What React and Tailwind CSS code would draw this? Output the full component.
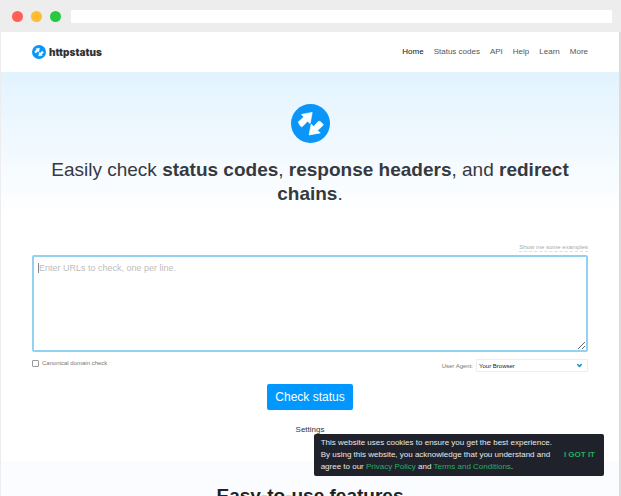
import { ChevronDown } from 'lucide-react'

const NAV = [
  ['Home', '#home'],
  ['Status codes', '#codes'],
  ['API', '#api'],
  ['Help', '#help'],
  ['Learn', '#learn'],
  ['More', '#more'],
]

function ArrowsLogo({ className }) {
  return (
    <svg viewBox="0 0 116 116" className={className} aria-hidden="true">
      <circle cx="58" cy="58" r="58" fill="#0a96f8" />
      <g fill="#fff" stroke="#fff" strokeWidth="2" strokeLinejoin="round">
        <path d="M63 25 31 31 38 39 21 54 25 59 25 62 31 68 36 65 49 51 57 58Z" />
        <path d="M54 92 60 60 68 67 80 53 86 51 96 61 94 65 79 79 87 86Z" />
      </g>
    </svg>
  )
}

function BrowserBar() {
  return (
    <div className="flex h-8 shrink-0 items-center bg-[#ededed] pl-3 pr-[9px]">
      <div className="flex gap-2">
        <span className="h-[11px] w-[11px] rounded-full bg-[#ff5f57]" />
        <span className="h-[11px] w-[11px] rounded-full bg-[#febc2e]" />
        <span className="h-[11px] w-[11px] rounded-full bg-[#28c840]" />
      </div>
      <div className="ml-[10px] h-[13px] flex-1 bg-white" />
    </div>
  )
}

function Header() {
  return (
    <header className="flex h-10 shrink-0 items-center justify-between px-[31px]">
      <a href="#home" className="flex items-center gap-[3px] text-[#333]">
        <ArrowsLogo className="h-[14px] w-[14px]" />
        <span className="font-['Inter',sans-serif] text-[10px] font-black">httpstatus</span>
      </a>
      <nav className="flex gap-[10px] text-[8px] text-[#555]">
        {NAV.map(([label, href], i) => (
          <a key={label} href={href} className={i === 0 ? 'text-[#111]' : ''}>
            {label}
          </a>
        ))}
      </nav>
    </header>
  )
}

function Hero() {
  return (
    <section className="flex h-[144px] shrink-0 flex-col items-center bg-linear-to-b from-[#e2f3fe] to-white px-[31px] pt-8">
      <ArrowsLogo className="h-[39px] w-[39px]" />
      <h1 className="mt-[15px] text-center text-[19px] leading-6 text-[#363a3e]">
        Easily check <b>status codes</b>, <b>response headers</b>, and <b>redirect chains</b>.
      </h1>
    </section>
  )
}

function CheckForm() {
  return (
    <form className="flex shrink-0 flex-col px-[31px] pt-[27px] pb-[25px]">
      <a
        href="#examples"
        className="self-end border-b border-dashed border-[#ddd] text-[6px] leading-[8px] text-[#aaa]"
      >
        Show me some examples
      </a>
      <div className="relative mt-[3px] flex">
        <textarea
          aria-label="URLs to check"
          placeholder="Enter URLs to check, one per line."
          className="h-[97px] w-full rounded-[2px] border-2 border-[#94d1f0] bg-white px-[5px] py-[5px] text-[9px] leading-3 outline-none placeholder:text-[#bdbdbd]"
        />
        <span className="absolute top-2 left-[6px] h-[10px] w-px bg-[#888]" />
      </div>
      <div className="mt-[7px] flex items-start justify-between text-[6px] leading-[8px] text-[#777]">
        <label className="flex items-center gap-[3px]">
          <input
            type="checkbox"
            className="h-[7px] w-[7px] appearance-none rounded-[1px] border border-[#999] bg-white"
          />
          Canonical domain check
        </label>
        <div className="flex items-center gap-[3px]">
          <label htmlFor="agent">User Agent:</label>
          <div className="relative flex">
            <select
              id="agent"
              className="h-[13px] w-[112px] appearance-none rounded-[1px] border border-[#eee] bg-white pl-[2px] text-[6px] text-[#222]"
            >
              <option>Your Browser</option>
            </select>
            <ChevronDown
              className="pointer-events-none absolute top-[3px] right-[5px] h-[7px] w-[7px] text-[#1a94d8]"
              strokeWidth={5}
            />
          </div>
        </div>
      </div>
      <button
        type="button"
        className="mt-3 h-[26px] self-center rounded-[2px] bg-[#0098ff] px-2 text-[12px] text-white"
      >
        Check status
      </button>
      <button type="button" className="mt-[14px] self-center text-[8px] leading-3 text-[#333]">
        Settings
      </button>
    </form>
  )
}

function CookieNotice() {
  return (
    <aside className="absolute right-[17px] bottom-5 flex items-center gap-3 rounded-[2px] bg-[#1f222b] py-[3px] pr-[9px] pl-[7px] text-[8px] leading-3 text-[#e8e8e8]">
      <p>
        This website uses cookies to ensure you get the best experience.
        <br />
        By using this website, you acknowledge that you understand and
        <br />
        agree to our{' '}
        <a href="#privacy" className="text-[#27ae60]">
          Privacy Policy
        </a>{' '}
        and{' '}
        <a href="#terms" className="text-[#27ae60]">
          Terms and Conditions
        </a>
        .
      </p>
      <button type="button" className="font-bold whitespace-nowrap text-[#27ae60]">
        I GOT IT
      </button>
    </aside>
  )
}

export default function App() {
  return (
    <div className="relative flex h-screen flex-col overflow-hidden bg-white font-['Liberation_Sans',Arial,sans-serif]">
      <BrowserBar />
      <div className="flex flex-1 flex-col overflow-hidden border-r-2 border-l border-r-[#dcdcdc] border-l-[#ededed]">
        <Header />
        <main className="flex flex-col">
          <Hero />
          <CheckForm />
          <section className="bg-[#fafcff] px-[31px] pt-[23px] pb-8 text-center">
            <h2 className="text-[19px] leading-6 font-bold text-[#222]">Easy-to-use features</h2>
          </section>
        </main>
      </div>
      <CookieNotice />
    </div>
  )
}
